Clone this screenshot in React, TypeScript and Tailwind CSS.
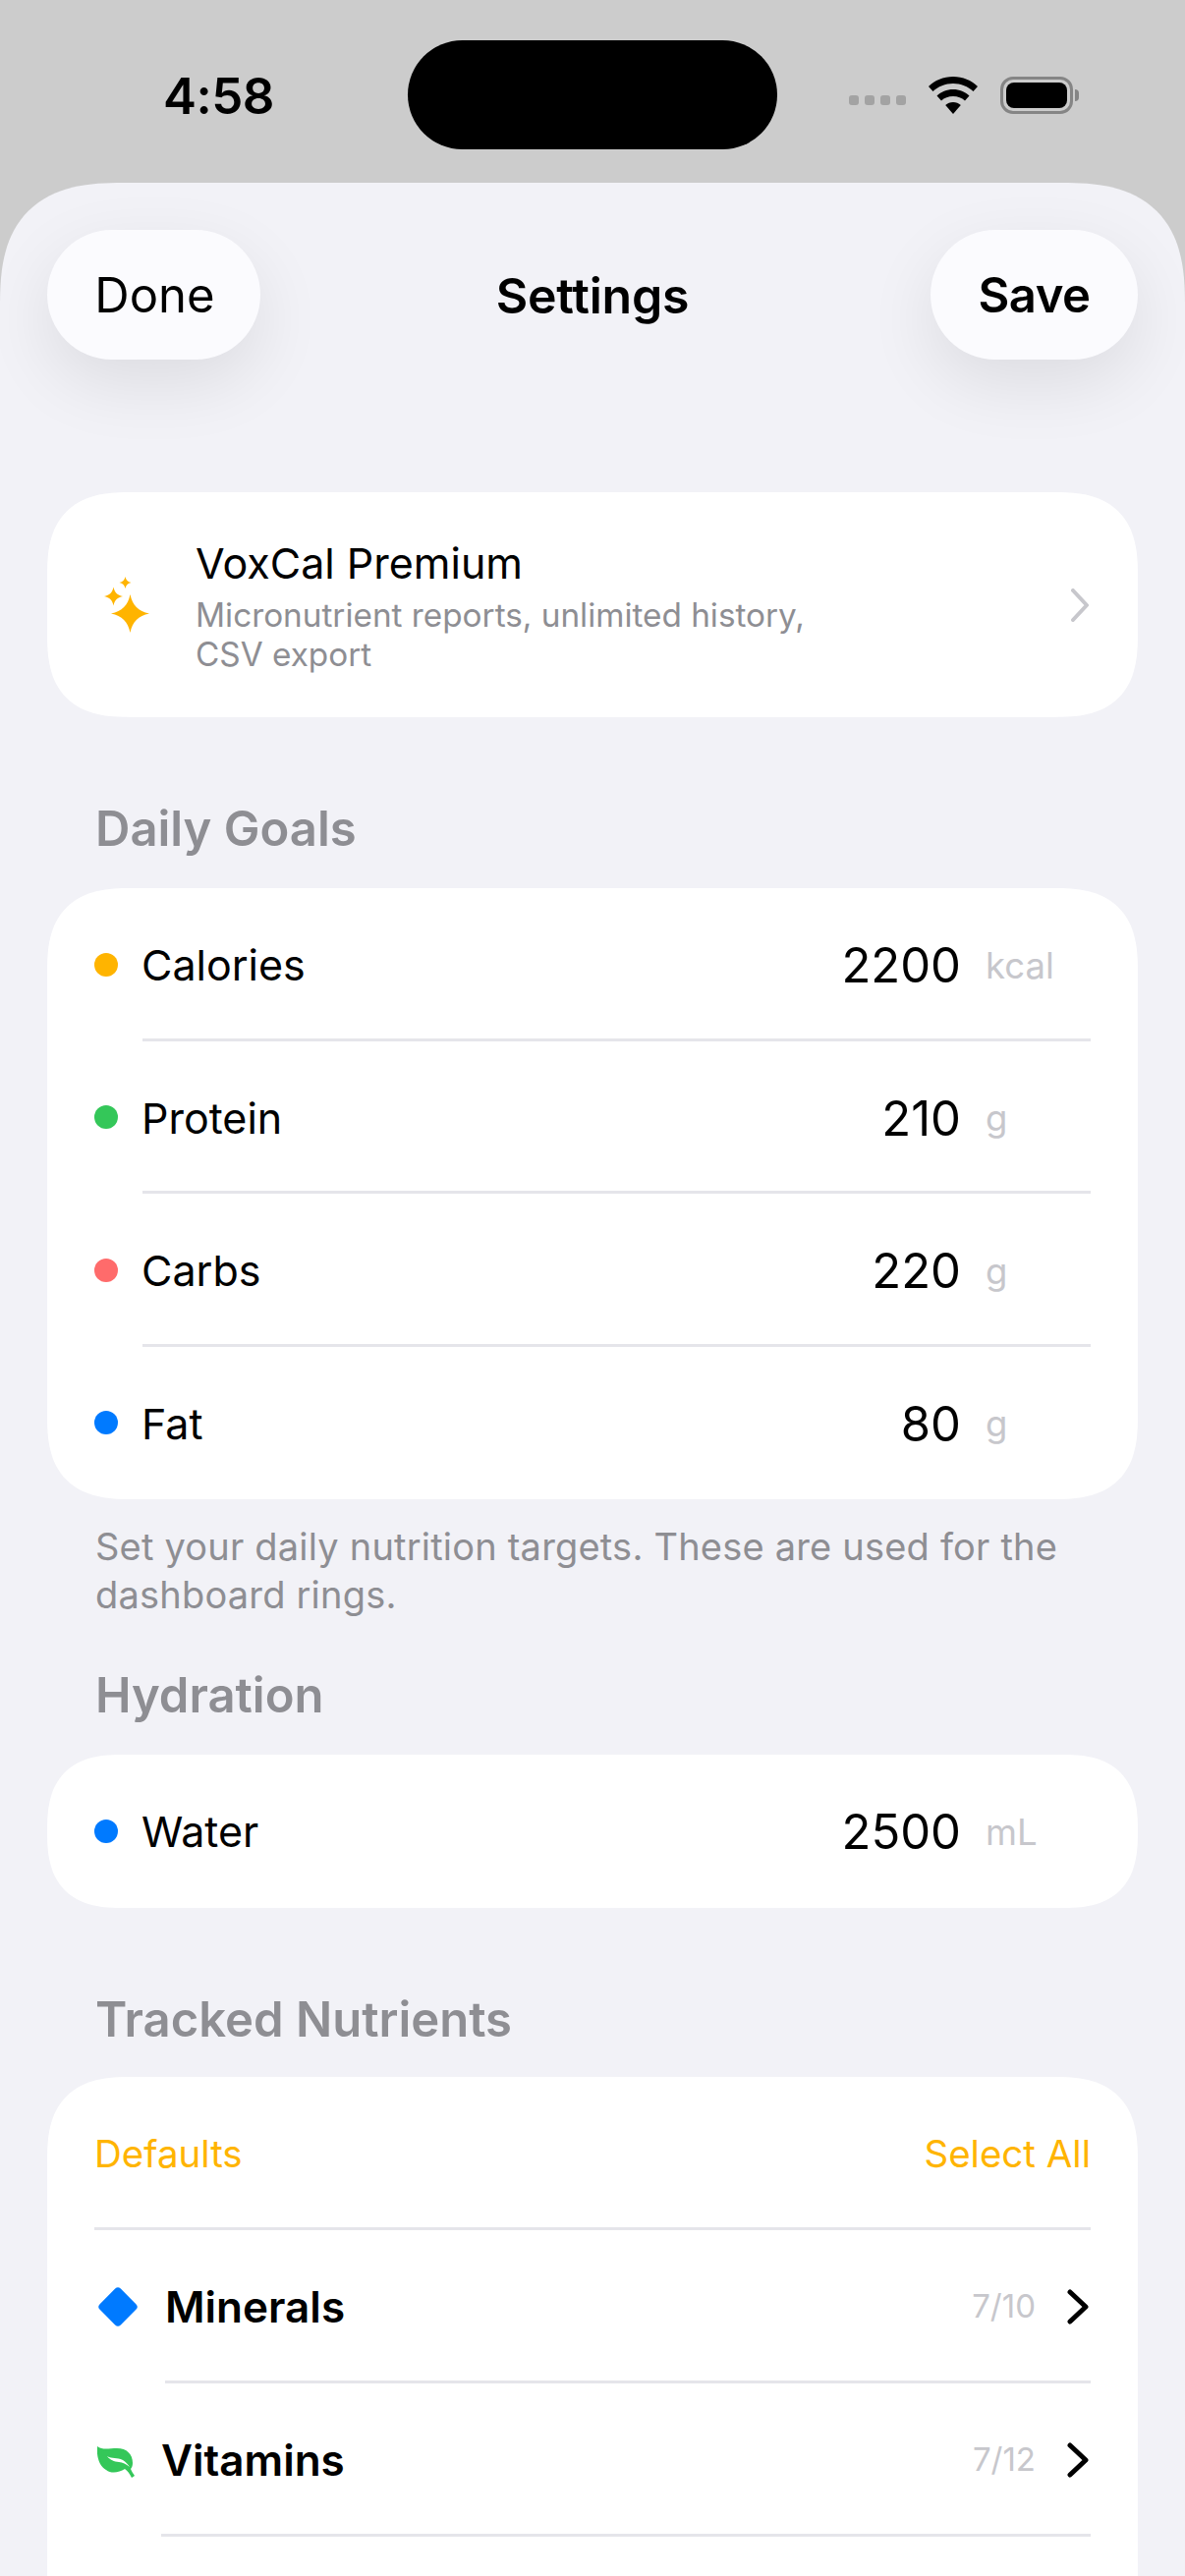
import type { ReactNode } from 'react';

const FONT = "font-['Inter','Noto_Sans',sans-serif]";

const goals = [
  { label: 'Calories', value: '2200', unit: 'kcal', dot: 'bg-[#ffb400]' },
  { label: 'Protein', value: '210', unit: 'g', dot: 'bg-[#34c759]' },
  { label: 'Carbs', value: '220', unit: 'g', dot: 'bg-[#ff6b6b]' },
  { label: 'Fat', value: '80', unit: 'g', dot: 'bg-[#007aff]' },
];

// four point star, sides pulled in towards the centre
function star(cx: number, cy: number, r: number) {
  const a = r * 0.12;
  const b = r * 0.42;
  return [
    `M${cx} ${cy - r}`,
    `C${cx + a} ${cy - b} ${cx + b} ${cy - a} ${cx + r} ${cy}`,
    `C${cx + b} ${cy + a} ${cx + a} ${cy + b} ${cx} ${cy + r}`,
    `C${cx - a} ${cy + b} ${cx - b} ${cy + a} ${cx - r} ${cy}`,
    `C${cx - b} ${cy - a} ${cx - a} ${cy - b} ${cx} ${cy - r}Z`,
  ].join('');
}

function WifiIcon() {
  return (
    <svg width="52" height="38" viewBox="0 0 52 38" fill="#000">
      <path d="M26 0C16 0 7.500 3.800 1 10L5.500 15C10.800 10 18 7 26 7C34 7 41.200 10 46.500 15L51 10C44.500 3.800 36 0 26 0Z" />
      <path d="M26 13C19.500 13 13.800 15.500 9.500 19.500L14 24.500C17 21.700 21.300 20 26 20C30.700 20 35 21.700 38 24.500L42.500 19.500C38.200 15.500 32.500 13 26 13Z" />
      <path d="M26 26C23 26 20.300 27.100 18.200 29L26 38L33.800 29C31.700 27.100 29 26 26 26Z" />
    </svg>
  );
}

function BatteryIcon() {
  return (
    <div className="flex items-center">
      <div className="flex h-[38px] w-[74px] items-center justify-center rounded-[13px] border-[3px] border-[#858585] p-[3px]">
        <div className="h-full w-full rounded-[8px] bg-black" />
      </div>
      <div className="ml-[2px] h-[12px] w-[4px] rounded-r-full bg-[#858585]" />
    </div>
  );
}

function StatusBar() {
  return (
    <div className="relative flex h-[186px] items-start justify-between bg-[#cccccc] pl-[166px] pr-[108px] pt-[66px]">
      <span className="text-[51px] font-semibold leading-[64px] tracking-[-0.5px] text-black">4:58</span>
      <div className="absolute left-[415px] top-[41px] h-[111px] w-[376px] rounded-full bg-black" />
      <div className="flex items-center pt-[12px]">
        <div className="mr-[22px] mt-[10px] flex gap-[6px]">
          <span className="h-[10px] w-[10px] rounded-[3px] bg-[#a3a3a3]" />
          <span className="h-[10px] w-[10px] rounded-[3px] bg-[#a3a3a3]" />
          <span className="h-[10px] w-[10px] rounded-[3px] bg-[#a3a3a3]" />
          <span className="h-[10px] w-[10px] rounded-[3px] bg-[#a3a3a3]" />
        </div>
        <WifiIcon />
        <div className="ml-[22px]">
          <BatteryIcon />
        </div>
      </div>
    </div>
  );
}

function PillButton({ children, bold }: { children: ReactNode; bold?: boolean }) {
  return (
    <button
      className={`flex h-[132px] items-center justify-center rounded-[66px] bg-[#fbfbfe] pt-[2px] text-[49px] text-black shadow-[0_24px_70px_rgba(0,0,0,0.09)] ${bold ? 'w-[211px] font-semibold tracking-[-0.5px]' : 'w-[217px] pl-[2px] font-normal'}`}
    >
      {children}
    </button>
  );
}

function SectionTitle({ children }: { children: ReactNode }) {
  return <h2 className="px-[97px] text-[49px] font-semibold leading-[60px] text-[#8e8e93]">{children}</h2>;
}

function GoalRow({ label, value, unit, dot, divider }: { label: string; value: string; unit: string; dot: string; divider?: boolean }) {
  return (
    <div className="relative flex h-[155.5px] items-center pl-[48px] pr-[48px]">
      <span className={`h-[24px] w-[24px] rounded-full ${dot}`} />
      <span className="ml-[24px] flex-1 pt-[2px] text-[43px] leading-none text-black">{label}</span>
      <span className="pt-[2px] text-[49px] leading-none text-black">{value}</span>
      <span className="ml-[25px] w-[107px] pt-[2px] text-[36.500px] leading-none text-[#c7c7cc]">{unit}</span>
      {divider && <div className="absolute bottom-0 left-[97px] right-[48px] h-[3px] bg-[#e5e5ea]" />}
    </div>
  );
}

function NutrientRow({ label, count, icon, dividerLeft }: { label: string; count: string; icon: ReactNode; dividerLeft: string }) {
  return (
    <div className="relative flex h-[156px] items-center pl-[51px] pr-[50px]">
      {icon}
      <span className="flex-1 text-[44px] font-semibold leading-none text-black">{label}</span>
      <span className="mr-[32px] text-[33px] leading-none text-[#c7c7cc]">{count}</span>
      <svg width="22" height="36" viewBox="0 0 22 36" fill="none" stroke="#000" strokeWidth="5" strokeLinecap="round" strokeLinejoin="round">
        <path d="M3 3L19 18L3 33" />
      </svg>
      <div className={`absolute bottom-0 right-[48px] h-[3px] bg-[#e5e5ea] ${dividerLeft}`} />
    </div>
  );
}

export default function App() {
  return (
    <div className={`h-[2622px] w-[1206px] overflow-hidden bg-[#cccccc] ${FONT}`}>
      <StatusBar />
      <div className="h-[2436px] rounded-t-[125px] bg-[#f2f2f7] [corner-shape:superellipse(1.4)]">
        {/* nav */}
        <div className="grid grid-cols-[1fr_auto_1fr] items-center px-[48px] pt-[48px]">
          <div className="flex justify-start">
            <PillButton>Done</PillButton>
          </div>
          <span className="pt-[2px] text-[50px] font-semibold tracking-[-0.2px] text-black">Settings</span>
          <div className="flex justify-end">
            <PillButton bold>Save</PillButton>
          </div>
        </div>

        {/* premium */}
        <div className="mx-[48px] mt-[135px] flex h-[229px] items-center rounded-[85px] bg-white pl-[58px] pr-[50px] [corner-shape:superellipse(1.4)]">
          <svg width="46" height="57" viewBox="0 0 46 57" fill="#ffb400" className="mr-[47px]">
            <path d={star(26.5, 37.5, 19.5)} />
            <path d={star(9.5, 20, 9.5)} />
            <path d={star(21.5, 6, 6)} />
          </svg>
          <div className="flex-1">
            <p className="text-[43px] leading-[54px] text-black">VoxCal Premium</p>
            <p className="mt-[6px] w-[660px] text-[33.300px] leading-[40px] text-[#8e8e93]">Micronutrient reports, unlimited history, CSV export</p>
          </div>
          <svg width="18" height="34" viewBox="0 0 18 34" fill="none" stroke="#c7c7cc" strokeWidth="4" strokeLinecap="round" strokeLinejoin="round">
            <path d="M2 2L16 17L2 32" />
          </svg>
        </div>

        {/* goals */}
        <div className="mt-[84px]">
          <SectionTitle>Daily Goals</SectionTitle>
        </div>
        <div className="mx-[48px] mt-[30px] rounded-[85px] bg-white [corner-shape:superellipse(1.4)]">
          {goals.map((g, i) => (
            <GoalRow key={g.label} {...g} divider={i < goals.length - 1} />
          ))}
        </div>
        <p className="mt-[24px] px-[97px] text-[38px] leading-[49px] tracking-[0.2px] text-[#8e8e93]">
          Set your daily nutrition targets. These are used for the dashboard rings.
        </p>

        {/* hydration */}
        <div className="mt-[48px]">
          <SectionTitle>Hydration</SectionTitle>
        </div>
        <div className="mx-[48px] mt-[30px] rounded-[85px] bg-white [corner-shape:superellipse(1.4)]">
          <GoalRow label="Water" value="2500" unit="mL" dot="bg-[#007aff]" />
        </div>

        {/* nutrients */}
        <div className="mt-[84px]">
          <SectionTitle>Tracked Nutrients</SectionTitle>
        </div>
        <div className="mx-[48px] mt-[28px] h-[600px] rounded-t-[85px] bg-white [corner-shape:superellipse(1.4)]">
          <div className="relative flex h-[156px] items-center justify-between px-[48px] pt-[2px] text-[38.500px] leading-none text-[#ffb400]">
            <span>Defaults</span>
            <span>Select All</span>
            <div className="absolute bottom-0 left-[48px] right-[48px] h-[3px] bg-[#e5e5ea]" />
          </div>
          <NutrientRow
            label="Minerals"
            count="7/10"
            dividerLeft="left-[120px]"
            icon={
              <svg width="42" height="42" viewBox="0 0 42 42" fill="#007aff" className="mr-[27px]">
                <rect x="6" y="6" width="30" height="30" rx="4" transform="rotate(45 21 21)" />
              </svg>
            }
          />
          <NutrientRow
            label="Vitamins"
            count="7/12"
            dividerLeft="left-[116px]"
            icon={
              <svg width="38" height="32" viewBox="0 0 38 32" className="mr-[27px] mt-[5px]">
                <path
                  fill="#34c759"
                  d="M0 0C5 4 12 2 20 2C30 2 36 8 36 17C36 20 35 22 34 23C35 26 37 28 38 30L35 32C33 28 31 25 28 23C22 27 14 28 9 24C2 20 -1 10 0 0Z"
                />
                <path fill="#fff" d="M10 10C15 13 20 11 26 14C29 16 31 18 33 21C29 18 26 16.500 22 16C17 15.500 13 14 10 10Z" />
              </svg>
            }
          />
        </div>
      </div>
    </div>
  );
}
